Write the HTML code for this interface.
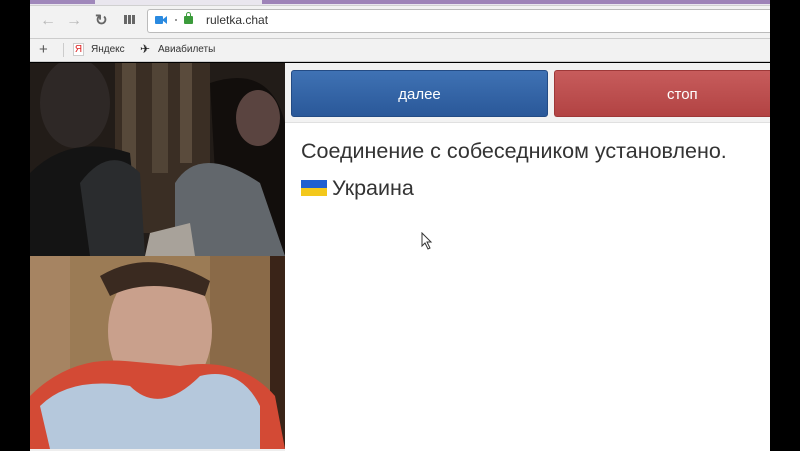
<!DOCTYPE html>
<html><head><meta charset="utf-8"><style>
*{margin:0;padding:0;box-sizing:border-box}
body{width:800px;height:451px;background:#000;position:relative;overflow:hidden;font-family:"Liberation Sans",sans-serif}
.a{position:absolute}
</style></head><body>
<div class="a" style="left:30px;top:0;width:740px;height:6px;background:#e9e6ee"></div>
<div class="a" style="left:30px;top:0;width:65px;height:4px;background:#a088bb"></div>
<div class="a" style="left:262px;top:0;width:508px;height:4px;background:#9e83b8"></div>
<div class="a" style="left:30px;top:5px;width:740px;height:33px;background:#f2f2f2;border-top:1px solid #d0d0d0"></div>
<div class="a" style="left:40px;top:12px;font-size:16px;color:#b8b8b8">&#8592;</div>
<div class="a" style="left:66px;top:12px;font-size:16px;color:#b8b8b8">&#8594;</div>
<div class="a" style="left:95px;top:11px;font-size:15px;color:#666;font-weight:bold">&#8635;</div>
<div class="a" style="left:124px;top:15px;width:11px;height:9px;background:repeating-linear-gradient(90deg,#666 0 3px,transparent 3px 4px)"></div>
<div class="a" style="left:147px;top:9px;width:623px;height:24px;background:#fff;border:1px solid #bbb;border-right:none;border-radius:3px 0 0 3px"></div>
<div class="a" style="left:155px;top:16px;width:8px;height:8px;background:#2a8ae0;border-radius:1px"></div>
<div class="a" style="left:162px;top:16px;width:0;height:0;border-top:4px solid transparent;border-bottom:4px solid transparent;border-right:5px solid #2a8ae0"></div>
<div class="a" style="left:175px;top:19px;width:2px;height:2px;background:#999"></div>
<div class="a" style="left:184px;top:16px;width:9px;height:8px;background:#3b9b3b;border-radius:1px"></div>
<div class="a" style="left:186px;top:12px;width:5px;height:6px;border:1px solid #3b9b3b;border-bottom:none;border-radius:3px 3px 0 0"></div>
<div class="a" style="left:206px;top:13px;font-size:12px;color:#333">ruletka.chat</div>
<div class="a" style="left:30px;top:38px;width:740px;height:24px;background:#f2f2f2;border-top:1px solid #ccc;border-bottom:1px solid #ccc"></div>
<div class="a" style="left:39px;top:41px;font-size:15px;color:#555">+</div>
<div class="a" style="left:63px;top:43px;width:1px;height:14px;background:#ccc"></div>
<div class="a" style="left:73px;top:43px;width:11px;height:13px;background:#fff;border:1px solid #ccc;color:#d22;font-size:10px;line-height:11px;text-align:center">Я</div>
<div class="a" style="left:91px;top:44px;font-size:10px;color:#333">Яндекс</div>
<div class="a" style="left:140px;top:42px;font-size:12px;color:#222">✈</div>
<div class="a" style="left:158px;top:44px;font-size:10px;color:#333">Авиабилеты</div>
<svg class="a" style="left:30px;top:63px" width="255" height="193">
<rect width="255" height="193" fill="#221c18"/>
<rect x="85" y="0" width="95" height="170" fill="#3a2e24"/>
<rect x="92" y="0" width="14" height="110" fill="#57493a"/>
<rect x="122" y="0" width="16" height="110" fill="#514436"/>
<rect x="150" y="0" width="12" height="100" fill="#5a4b3c"/>
<ellipse cx="45" cy="40" rx="35" ry="45" fill="#2e2826"/>
<path d="M0 110 Q40 70 100 90 L110 193 L0 193Z" fill="#141414"/>
<path d="M50 120 Q80 80 110 110 L115 193 L60 193Z" fill="#2a2c2e"/>
<path d="M180 20 Q240 0 255 60 L255 193 L190 193 L185 110Z" fill="#120e0c"/>
<ellipse cx="228" cy="55" rx="22" ry="28" fill="#5a4440"/>
<path d="M145 120 Q170 80 230 120 L255 193 L145 193Z" fill="#62676c"/>
<path d="M120 170 L160 160 L165 193 L115 193Z" fill="#a8a29a"/>
</svg>
<svg class="a" style="left:30px;top:256px" width="255" height="193">
<rect width="255" height="193" fill="#9b7b55"/>
<rect x="180" y="0" width="75" height="193" fill="#8a6a48"/>
<rect x="240" y="0" width="15" height="193" fill="#3a2418"/>
<rect x="0" y="0" width="40" height="193" fill="#a68462"/>
<ellipse cx="130" cy="75" rx="52" ry="68" fill="#c9a08c"/>
<path d="M70 20 Q120 -10 180 25 L175 40 Q120 20 80 40Z" fill="#3a2a20"/>
<path d="M0 140 Q40 100 95 105 L150 110 Q210 100 245 140 L255 193 L0 193Z" fill="#d34a35"/>
<path d="M10 150 Q40 120 100 130 Q130 160 170 120 Q210 110 230 150 L230 193 L20 193Z" fill="#b5c8dc"/>
</svg>
<div class="a" style="left:30px;top:449px;width:255px;height:2px;background:#eee"></div>
<div class="a" style="left:285px;top:63px;width:485px;height:388px;background:#fff"></div>
<div class="a" style="left:285px;top:63px;width:485px;height:60px;background:#f2f2f2;border-bottom:1px solid #e0e0e0"></div>
<div class="a" style="left:291px;top:70px;width:257px;height:47px;border-radius:3px;background:linear-gradient(#3f72b4,#2a5899);border:1px solid #234b84;color:#fff;font-size:15px;text-align:center;line-height:47px">далее</div>
<div class="a" style="left:554px;top:70px;width:216px;height:47px;border-radius:3px 0 0 3px;background:linear-gradient(#c75c5c,#b24343);border:1px solid #9e3838;border-right:none;color:#fff;font-size:15px;line-height:47px;padding-left:112px">стоп</div>
<div class="a" style="left:301px;top:139px;font-size:21.5px;color:#333;white-space:nowrap">Соединение с собеседником установлено.</div>
<div class="a" style="left:301px;top:180px;width:26px;height:16px;background:linear-gradient(#1f5fd1 50%,#f3c81c 50%)"></div>
<div class="a" style="left:332px;top:176px;font-size:21.5px;color:#333">Украина</div>
<svg class="a" style="left:421px;top:232px" width="12" height="18"><path d="M1 1 L1 14 L4 11 L7 17 L9 16 L6 10 L10 10Z" fill="#fff" stroke="#333" stroke-width="1"/></svg>
</body></html>
